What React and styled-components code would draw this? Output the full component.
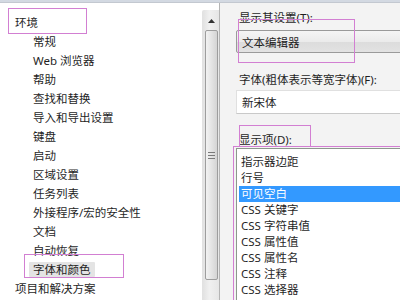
import React from 'react'
import styled, { createGlobalStyle } from 'styled-components'

const GlobalStyle = createGlobalStyle`
  html, body {
    margin: 0;
    padding: 0;
    background: #f3f3f3;
  }
  body {
    font-family: "Noto Sans", "Noto Sans CJK SC", sans-serif;
    font-size: 11.5px;
    color: #1f1f1f;
  }
`

const Frame = styled.div`
  position: relative;
  width: 400px;
  height: 300px;
  overflow: hidden;
  display: flex;
  flex-direction: column;
  background: #f3f3f3;
`

const TopStrip = styled.div`
  height: 3px;
  flex: none;
  background: #d3d9e2;
  border-bottom: 1px solid #c3c8d0;
  box-sizing: border-box;
`

const Main = styled.div`
  flex: 1;
  display: flex;
  min-height: 0;
`

const TreeBox = styled.div`
  width: 220px;
  flex: none;
  display: flex;
  background: #fff;
  border-right: 1px solid #b4b4b4;
  box-sizing: border-box;
`

const TreeList = styled.div`
  flex: 1;
  padding-top: 10px;
`

const TreeRow = styled.div`
  height: 19px;
  display: flex;
  align-items: center;
  padding-left: ${p => (p.$child ? 29 : 11)}px;
  white-space: nowrap;
`

const TreeLabel = styled.span`
  padding: 0 4px;
  line-height: 15px;
  background: ${p => (p.$selected ? '#e4e4e4' : 'transparent')};
  border-radius: 1px;
`

const ScrollBar = styled.div`
  width: 16px;
  flex: none;
  margin-top: 7px;
  display: flex;
  flex-direction: column;
  align-items: center;
  background: linear-gradient(to right, #e2e2e2, #f0f0f0 40%, #e6e6e6);
  border-left: 1px solid #e2e2e2;
  border-top-left-radius: 2px;
`

const ArrowButton = styled.div`
  height: 18px;
  width: 100%;
  display: flex;
  align-items: center;
  justify-content: center;
  padding-top: 3px;
  box-sizing: border-box;
`

const Thumb = styled.div`
  margin-top: 2px;
  width: 13px;
  height: 250px;
  box-sizing: border-box;
  border: 1px solid #9d9d9d;
  border-radius: 2px;
  background: linear-gradient(to right, #f2f2f2, #e4e4e4 50%, #d4d4d4);
  display: flex;
  align-items: center;
  justify-content: center;
`

const RightPane = styled.div`
  flex: 1;
  padding: 7px 0 0 16px;
  display: flex;
  flex-direction: column;
  min-width: 0;
`

const FieldLabel = styled.div`
  height: 16px;
  line-height: 16px;
  padding-left: 3px;
  margin-top: ${p => p.$gap || 0}px;
  white-space: nowrap;
`

const Dropdown = styled.div`
  margin: 4px -6px 0 0;
  height: 23px;
  box-sizing: border-box;
  border: 1px solid #9a9a9a;
  border-radius: 2px;
  background: linear-gradient(to bottom, #f5f5f5, #ebebeb 50%, #dcdcdc 51%, #e2e2e2);
  display: flex;
  align-items: center;
  padding-left: 5px;
`

const FontBox = styled.div`
  margin: 2px -6px 0 0;
  height: 24px;
  box-sizing: border-box;
  border: 1px solid #e0e0e0;
  border-bottom-color: #c9c9c9;
  background: #fff;
  display: flex;
  align-items: center;
  padding-left: 5px;
`

const ListBox = styled.div`
  flex: 1;
  margin-right: -6px;
  border: 1px solid #8c998c;
  border-bottom: none;
  background: #fff;
  padding-top: 5px;
`

const ListItem = styled.div`
  height: 16px;
  line-height: 16px;
  margin-left: 2px;
  padding-left: 2px;
  white-space: nowrap;
  background: ${p => (p.$selected ? '#3399ff' : 'transparent')};
  color: ${p => (p.$selected ? '#fff' : 'inherit')};
`

const Mark = styled.div`
  position: absolute;
  left: ${p => p.$x}px;
  top: ${p => p.$y}px;
  width: ${p => p.$w}px;
  height: ${p => p.$h}px;
  border: 1.5px solid #d27fd2;
  box-sizing: border-box;
  pointer-events: none;
`

const treeItems = [
  { text: '环境' },
  { text: '常规', child: true },
  { text: 'Web 浏览器', child: true },
  { text: '帮助', child: true },
  { text: '查找和替换', child: true },
  { text: '导入和导出设置', child: true },
  { text: '键盘', child: true },
  { text: '启动', child: true },
  { text: '区域设置', child: true },
  { text: '任务列表', child: true },
  { text: '外接程序/宏的安全性', child: true },
  { text: '文档', child: true },
  { text: '自动恢复', child: true },
  { text: '字体和颜色', child: true, selected: true },
  { text: '项目和解决方案' },
]

const displayItems = [
  '指示器边距',
  '行号',
  '可见空白',
  'CSS 关键字',
  'CSS 字符串值',
  'CSS 属性值',
  'CSS 属性名',
  'CSS 注释',
  'CSS 选择器',
]

const App = () => {
  return (
    <Frame>
      <GlobalStyle />
      <TopStrip />
      <Main>
        <TreeBox>
          <TreeList>
            {treeItems.map(item => (
              <TreeRow key={item.text} $child={item.child}>
                <TreeLabel $selected={item.selected}>{item.text}</TreeLabel>
              </TreeRow>
            ))}
          </TreeList>
          <ScrollBar>
            <ArrowButton>
              <svg width="7" height="4" viewBox="0 0 7 4">
                <path d="M0 4 L3.5 0 L7 4 Z" fill="#333" />
              </svg>
            </ArrowButton>
            <Thumb>
              <svg width="7" height="7" viewBox="0 0 7 7">
                <path d="M0 0.5H7M0 3.5H7M0 6.5H7" stroke="#7a7a7a" strokeWidth="1" />
              </svg>
            </Thumb>
          </ScrollBar>
        </TreeBox>
        <RightPane>
          <FieldLabel>显示其设置(T):</FieldLabel>
          <Dropdown>文本编辑器</Dropdown>
          <FieldLabel $gap={19}>字体(粗体表示等宽字体)(F):</FieldLabel>
          <FontBox>新宋体</FontBox>
          <FieldLabel $gap={18}>显示项(D):</FieldLabel>
          <ListBox>
            {displayItems.map((text, i) => (
              <ListItem key={text} $selected={i === 2}>{text}</ListItem>
            ))}
          </ListBox>
        </RightPane>
      </Main>
      <Mark $x={8} $y={8} $w={79} $h={26} />
      <Mark $x={24} $y={254} $w={100} $h={24} />
      <Mark $x={238} $y={19} $w={117} $h={44} />
      <Mark $x={239} $y={125} $w={72} $h={22} />
      <Mark $x={233} $y={146} $w={175} $h={160} />
    </Frame>
  )
}

export default App
